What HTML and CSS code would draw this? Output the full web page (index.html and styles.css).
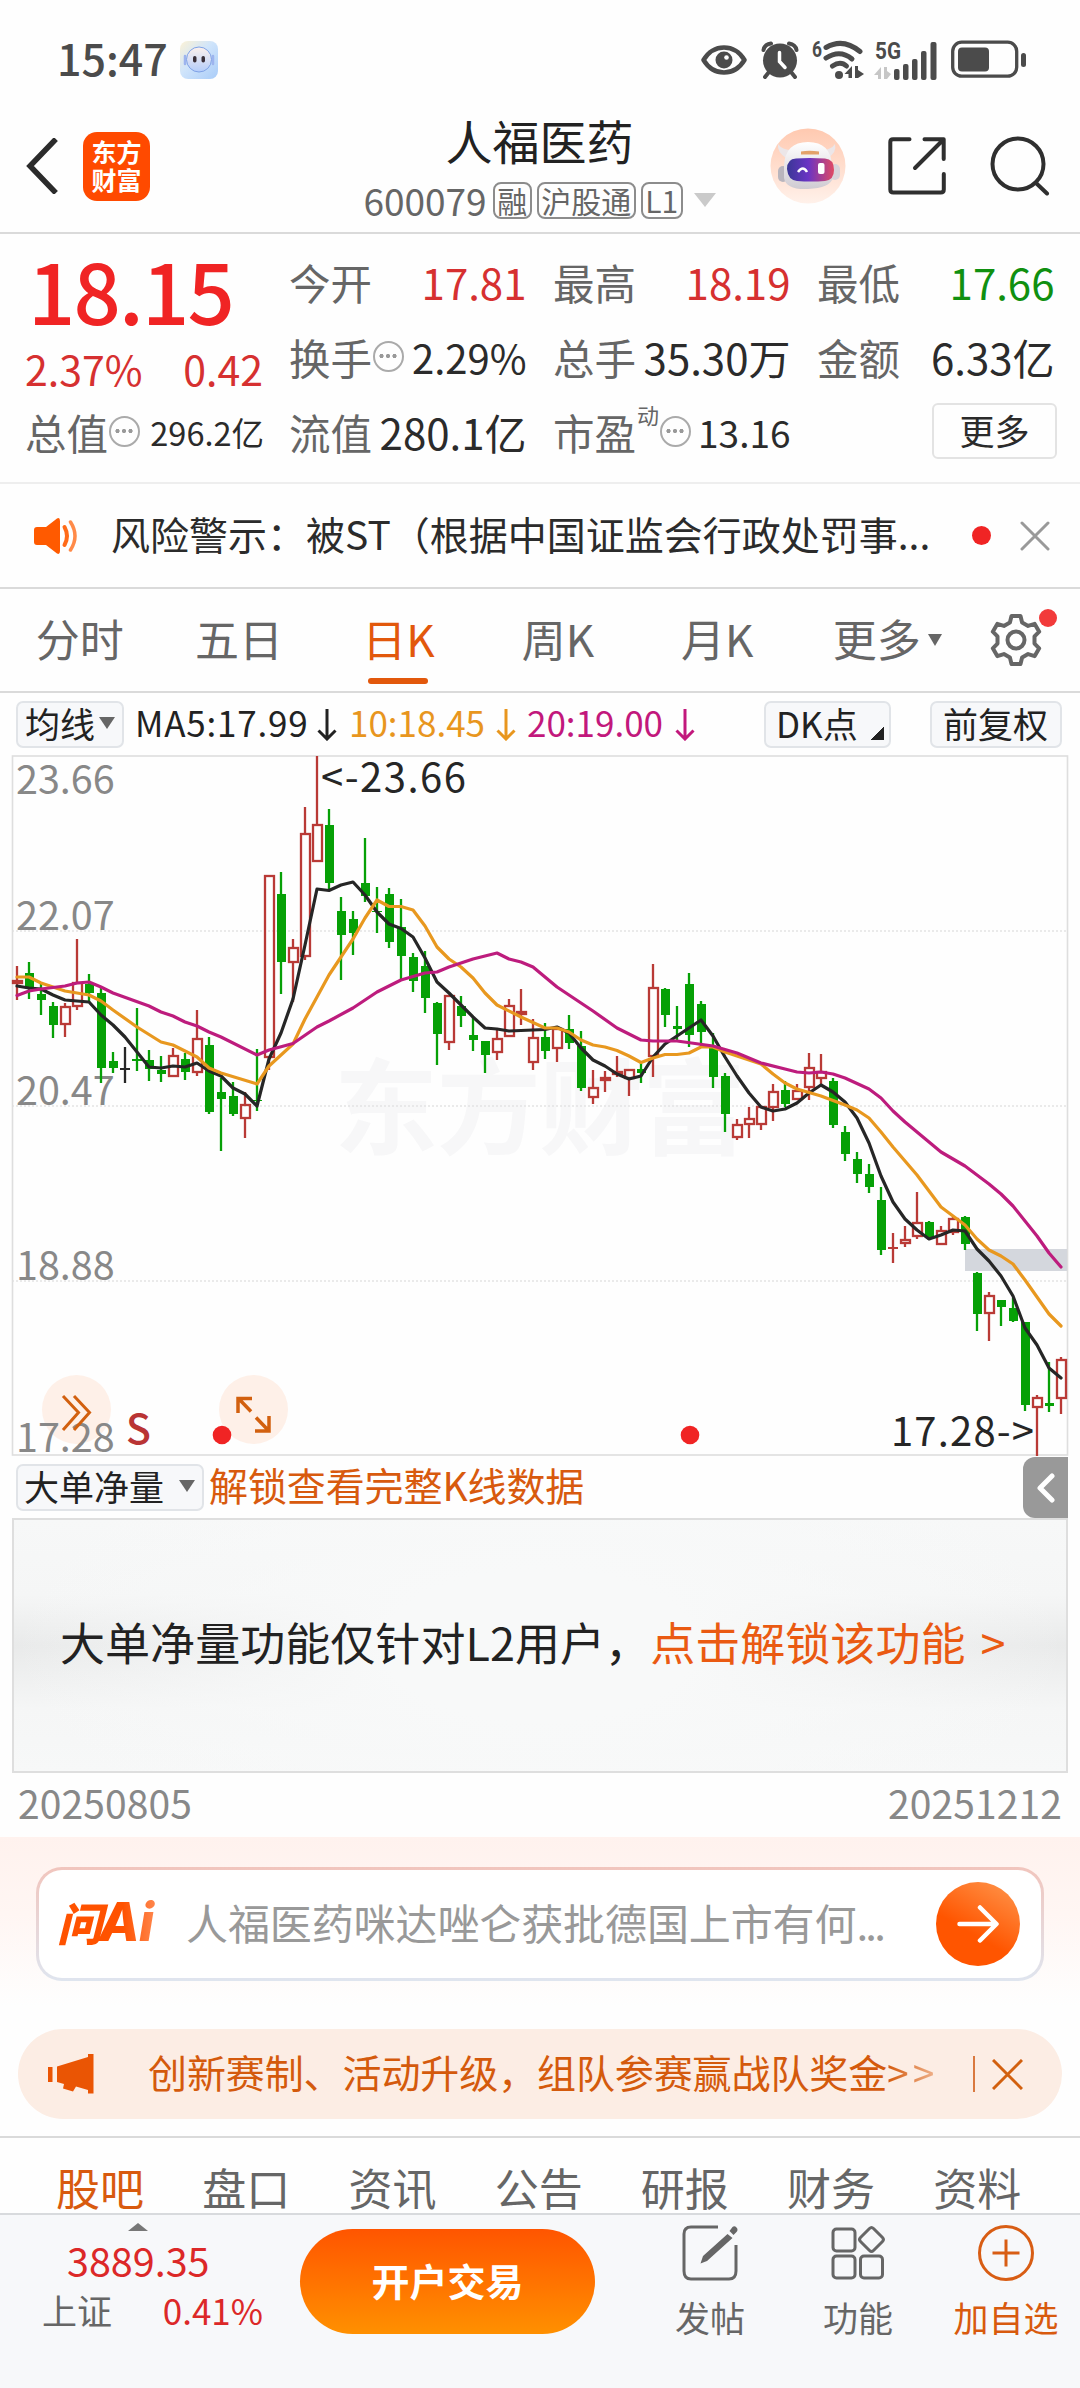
FILE: index.html
```html
<!DOCTYPE html>
<html lang="zh-CN">
<head>
<meta charset="utf-8">
<title>人福医药 600079</title>
<link rel="stylesheet" href="styles.css">
</head>
<body>
<div class="status">
  <span class="clock">15:47</span>
  <svg class="face" width="38" height="38" viewBox="0 0 38 38">
    <defs><linearGradient id="fc" x1="0" y1="0" x2="1" y2="1"><stop offset="0" stop-color="#fdf3d6"/><stop offset=".45" stop-color="#cfe4fb"/><stop offset="1" stop-color="#a9ccf8"/></linearGradient>
    <linearGradient id="fh" x1="0" y1="0" x2="0" y2="1"><stop offset="0" stop-color="#fdf1ec"/><stop offset="1" stop-color="#b4cdfb"/></linearGradient></defs>
    <rect width="38" height="38" rx="8" fill="url(#fc)"/><path d="M5 15v8M33 15v8" stroke="#9db4ee" stroke-width="2.5" stroke-linecap="round"/>
    <circle cx="19" cy="18.500" r="12.500" fill="url(#fh)" stroke="#7fa2e6"/><rect x="13" y="15" width="3.500" height="6.500" rx="1.700" fill="#3a2f38"/><rect x="21.500" y="15" width="3.500" height="6.500" rx="1.700" fill="#3a2f38"/>
  </svg>
  <div class="status-icons">
    <svg width="46" height="36" viewBox="0 0 46 36"><path d="M2.500 18C8 9 15 5.500 23 5.500S38 9 43.500 18C38 27 31 30.500 23 30.500S8 27 2.500 18z" fill="none" stroke="#4b4b4b" stroke-width="4.500" stroke-linejoin="round"/><circle cx="23" cy="18" r="8.500" fill="#4b4b4b"/><circle cx="25.500" cy="15.500" r="2.300" fill="#fff"/></svg>
    <svg class="i-alarm" width="38" height="38" viewBox="0 0 38 38"><g fill="none" stroke="#4b4b4b" stroke-linecap="round"><path d="M2.500 9Q3.500 3.500 10 2.500M35.500 9Q34.500 3.500 28 2.500" stroke-width="4"/><path d="M8 31l-4 5M30 31l4 5" stroke-width="4"/></g><circle cx="19" cy="19.500" r="17" fill="#4b4b4b"/><path d="M18.500 11.500v9l5.500 6" fill="none" stroke="#fff" stroke-width="3.500" stroke-linecap="round"/></svg>
    <svg class="i-wifi" width="52" height="42" viewBox="0 0 52 42"><text x="0" y="18" class="net" font-size="22" textLength="10" lengthAdjust="spacingAndGlyphs">6</text><g fill="none" stroke="#4b4b4b" stroke-width="5" stroke-linecap="round"><path d="M14 8.500q17-10 34 4"/><path d="M14 19q14-9 26 1"/><path d="M20.500 27q8-5.500 14 0"/></g><circle cx="27" cy="36" r="4" fill="#4b4b4b"/><path d="M40 27v12h-3.500v-4h-4zM43 39V27h3v4l6 4-6 4z" fill="#4b4b4b"/></svg>
    <svg class="i-cell" width="63" height="42" viewBox="0 0 63 42"><text x="1" y="20" class="net" font-size="24" textLength="26" lengthAdjust="spacingAndGlyphs">5G</text><path d="M7 28v12H4v-4H0zM10 40V28h3v4l4 3-4 5z" fill="#c6c6c6"/><g fill="#4b4b4b"><rect x="20" y="30" width="5.500" height="11" rx="2"/><rect x="29" y="25" width="5.500" height="16" rx="2"/><rect x="38" y="20" width="5.500" height="21" rx="2"/><rect x="47" y="12" width="5.500" height="29" rx="2"/><rect x="56.500" y="3" width="6" height="38" rx="2"/></g></svg>
    <svg class="i-batt" width="75" height="38" viewBox="0 0 75 38"><rect x="1.700" y="2.200" width="64" height="34" rx="9" fill="none" stroke="#4b4b4b" stroke-width="3.300"/><rect x="7" y="7.500" width="31" height="24" rx="4" fill="#4b4b4b"/><rect x="70" y="13" width="5" height="14" rx="2.500" fill="#4b4b4b"/></svg>
  </div>
</div>

<header class="header">
  <div class="side">
    <svg width="34" height="56" viewBox="0 0 34 56"><path d="M29 3L5 28l24 25" fill="none" stroke="#2b2b2b" stroke-width="5.500" stroke-linecap="square"/></svg>
    <div class="logo"><span>东方</span><span>财富</span></div>
  </div>
  <div class="title">
    <h1>人福医药</h1>
    <div class="code">600079<i class="first">融</i><i>沪股通</i><i>L1</i><b class="tri"></b></div>
  </div>
  <div class="side right">
    <svg width="76" height="76" viewBox="0 0 76 76">
      <defs><linearGradient id="rb" x1="0" y1="0" x2="0" y2="1"><stop offset="0" stop-color="#ffc9b0"/><stop offset="1" stop-color="#fff1ea"/></linearGradient>
      <linearGradient id="rv" x1="0" y1="0" x2="1" y2="0"><stop offset="0" stop-color="#3a3796"/><stop offset=".45" stop-color="#6a34c4"/><stop offset="1" stop-color="#e04a63"/></linearGradient>
      <linearGradient id="rw" x1="0" y1="0" x2="0" y2="1"><stop offset="0" stop-color="#ffffff"/><stop offset="1" stop-color="#cfcbd2"/></linearGradient></defs>
      <circle cx="38" cy="38" r="37.500" fill="url(#rb)"/>
      <path d="M8 16q-1 8 8 14l6-8q-10 0-14-6zM65 16q2 8-7 14l-6-8q9 0 13-6z" fill="#ece6e8"/>
      <rect x="8" y="38" width="10" height="16" rx="5" fill="#b9b5bd"/><rect x="60" y="36" width="10" height="16" rx="5" fill="#d8d4da"/>
      <path d="M14 38Q15 14 38 14t24 24l1 12Q60 60 38 61T14 50z" fill="url(#rw)"/>
      <path d="M31 23.500q8-1.500 18 0v3H31z" fill="#e3a26a"/>
      <path d="M17 41q0-10 9-10.500 13-1 29 0Q64 31 64 42q0 10-9 11-14 1-28 0-9-1-10-12z" fill="url(#rv)"/>
      <path d="M28 44q5-7 9 0" fill="none" stroke="#fff" stroke-width="2.500"/><rect x="48" y="35" width="6.500" height="11" rx="2" fill="#fff"/>
    </svg>
    <svg class="share" width="58" height="58" viewBox="0 0 58 58"><g fill="none" stroke="#2f2f2f" stroke-width="4" stroke-linecap="round" stroke-linejoin="round"><path d="M21.500 2.300H5Q2.300 2.300 2.300 5v47.500q0 3 3 3h47.500q3 0 3-3V37"/><path d="M36.500 2.300H55.700V22M55 3L27 31"/></g></svg>
    <svg class="search" width="60" height="60" viewBox="0 0 60 60"><circle cx="28" cy="28" r="25.500" fill="none" stroke="#2f2f2f" stroke-width="4"/><path d="M46 47l11 10.500" stroke="#2f2f2f" stroke-width="4" stroke-linecap="round"/></svg>
  </div>
</header>

<section class="quote">
  <div class="col first">
    <div class="price">18.15</div>
    <div class="chg"><span>2.37%</span><span>0.42</span></div>
    <div class="cell"><label>总值</label><em class="info"></em><span class="v s33">296.2亿</span></div>
  </div>
  <div class="col">
    <div class="cell"><label>今开</label><span class="v red">17.81</span></div>
    <div class="cell"><label>换手</label><em class="info"></em><span class="v s40">2.29%</span></div>
    <div class="cell"><label>流值</label><span class="v">280.1亿</span></div>
  </div>
  <div class="col">
    <div class="cell"><label>最高</label><span class="v red">18.19</span></div>
    <div class="cell"><label>总手</label><span class="v">35.30万</span></div>
    <div class="cell"><label>市盈</label><sup>动</sup><em class="info"></em><span class="v s37">13.16</span></div>
  </div>
  <div class="col">
    <div class="cell"><label>最低</label><span class="v green">17.66</span></div>
    <div class="cell"><label>金额</label><span class="v">6.33亿</span></div>
    <div class="cell"><span class="more">更多</span></div>
  </div>
</section>

<section class="alert">
  <svg width="46" height="38" viewBox="0 0 46 38"><path d="M3 10h9L23 1.500Q26 0 26 4v30q0 4-3 2.500L12 28H3q-3 0-3-3V13q0-3 3-3z" fill="#ff5a00"/><path d="M30.500 10q5 9 0 18" fill="none" stroke="#ff6a18" stroke-width="4" stroke-linecap="round"/><path d="M36.500 5q9 14 0 28" fill="none" stroke="#ff8a48" stroke-width="3.500" stroke-linecap="round"/></svg>
  <p>风险警示：被ST（根据中国证监会行政处罚事...</p>
  <b class="dot"></b>
  <svg width="30" height="30" viewBox="0 0 30 30"><path d="M2 2l26 26M28 2L2 28" stroke="#999" stroke-width="3" stroke-linecap="round"/></svg>
</section>

<nav class="ktabs">
  <span>分时</span><span>五日</span><span class="on">日K</span><span>周K</span><span>月K</span><span>更多</span>
  <b class="tri"></b>
  <div class="gear">
    <svg width="52" height="52" viewBox="0 0 52 52"><path d="M21.500 2h9l1.600 6.500 6 3.400 6.600-2 4.500 7.800-4.700 4.700v7.200l4.700 4.700-4.500 7.800-6.600-2-6 3.400L30.500 50h-9l-1.600-6.500-6-3.400-6.600 2-4.500-7.800 4.700-4.700v-7.200l-4.700-4.700 4.500-7.800 6.600 2 6-3.400z" fill="none" stroke="#666" stroke-width="4" stroke-linejoin="round"/><circle cx="26" cy="26" r="8.500" fill="none" stroke="#666" stroke-width="4"/></svg>
    <b class="dot"></b>
  </div>
</nav>

<div class="ma">
  <span class="chip avg">均线<b class="tri"></b></span>
  <span class="m m5">MA5:17.99<svg width="20" height="32" viewBox="0 0 20 32"><path d="M10 0v30M1.500 21.500L10 30l8.500-8.500" fill="none" stroke="currentColor" stroke-width="3"/></svg></span>
  <span class="m m10">10:18.45<svg width="20" height="32" viewBox="0 0 20 32"><path d="M10 0v30M1.500 21.500L10 30l8.500-8.500" fill="none" stroke="currentColor" stroke-width="3"/></svg></span>
  <span class="m m20">20:19.00<svg width="20" height="32" viewBox="0 0 20 32"><path d="M10 0v30M1.500 21.500L10 30l8.500-8.500" fill="none" stroke="currentColor" stroke-width="3"/></svg></span>
  <span class="chip dk">DK点<b></b></span>
  <span class="chip fq">前复权</span>
</div>

<svg class="chart" id="chart" width="1080" height="701" viewBox="0 755 1080 701">
  <text class="mark" x="334" y="1147" textLength="412">东方财富</text>
  <g stroke="#e3e3e3" stroke-width="1.500" stroke-dasharray="2 2"><path d="M12 931H1067M12 1106H1067M12 1281H1067"/></g>
  <rect x="12.500" y="756" width="1055" height="699" fill="none" stroke="#dedede" stroke-width="1.600"/>
  <rect x="965" y="1249" width="102" height="22" fill="#d4d7dd"/>
  <circle cx="76.500" cy="1409.500" r="34.500" fill="#fef0e8"/><circle cx="253.500" cy="1409.500" r="34.500" fill="#fef0e8"/>
  <g class="axis"><text x="16" y="793.500">23.66</text><text x="16" y="930">22.07</text><text x="16" y="1105">20.47</text><text x="16" y="1280">18.88</text><text x="16" y="1451.500">17.28</text></g>
  <g fill="none" stroke="#d2600f" stroke-width="3"><path d="M63 1396l15.500 16.500L63 1430M74 1396l15.500 16.500L74 1430"/><path d="M238 1413v-14.500h14M239 1399l12 12.500M269 1416v15h-14M268 1430l-12-12.500" stroke-width="3.500"/></g>
  <text class="sell" x="126" y="1444">S</text>
  <circle cx="222" cy="1435" r="9.300" fill="#f02424"/><circle cx="690" cy="1435" r="9.300" fill="#f02424"/>
  <g id="candles"></g>
  <g id="lines" fill="none" stroke-width="3.200" stroke-linejoin="round" stroke-linecap="round"></g>
  <text class="peak" x="321" y="791.500" textLength="145">&lt;-23.66</text>
  <text class="peak" x="891" y="1446" textLength="143">17.28-&gt;</text>
</svg>

<div class="sub">
  <span class="chip big">大单净量<b class="tri"></b></span>
  <span class="unlock">解锁查看完整K线数据</span>
  <span class="handle"><svg width="18" height="30" viewBox="0 0 18 30"><path d="M15 3L3 15l12 12" fill="none" stroke="#fff" stroke-width="5" stroke-linecap="round" stroke-linejoin="round"/></svg></span>
</div>
<div class="locked"><p>大单净量功能仅针对L2用户，<span>点击解锁该功能 &gt;</span></p></div>
<div class="dates"><span>20250805</span><span>20251212</span></div>

<section class="ask">
  <div class="askbox">
    <span class="wen">问<em>Ai</em></span>
    <span class="hint">人福医药咪达唑仑获批德国上市有何<i>...</i></span>
    <span class="go"><svg width="42" height="38" viewBox="0 0 42 38"><path d="M2.500 19H39M23 2.500L39.500 19 23 35.500" fill="none" stroke="#fff" stroke-width="4.500" stroke-linecap="round" stroke-linejoin="round"/></svg></span>
  </div>
</section>

<section class="promo">
  <svg width="46" height="40" viewBox="0 0 46 40"><path d="M0 13h4.500v15H0zM9 12.500L40 3V0h5.500v39.500H40V36L28 32.500l-3 5-10-3 1-4.500-7-2z" fill="#ea5504"/></svg>
  <p>创新赛制、活动升级，组队参赛赢战队奖金<span>&gt;&gt;</span></p>
  <i></i>
  <svg width="31" height="31" viewBox="0 0 31 31"><path d="M1 1l29 29M30 1L1 30" stroke="#d2600f" stroke-width="3"/></svg>
</section>

<nav class="btabs"><span class="on">股吧</span><span>盘口</span><span>资讯</span><span>公告</span><span>研报</span><span>财务</span><span>资料</span></nav>

<footer class="footer">
  <div class="index">
    <b class="up"></b>
    <div class="pt">3889.35</div>
    <div class="ix"><span>上证</span><span class="r">0.41%</span></div>
  </div>
  <div class="trade">开户交易</div>
  <div class="act">
    <svg width="56" height="56" viewBox="0 0 56 56"><path d="M36 2H9Q2 2 2 9v37q0 8 7 8h38q7 0 7-8V20" fill="none" stroke="#666" stroke-width="3"/><path d="M45.500 9l5 4L25 36l-6.500 2.500L21 31zM47.500 6l3-4q2-1.500 4 .5t0 4.500l-3 3z" fill="#666"/></svg>
    <span>发帖</span>
  </div>
  <div class="act">
    <svg width="56" height="56" viewBox="0 0 56 56"><g fill="none" stroke="#666" stroke-width="3"><rect x="3" y="4" width="22" height="22" rx="3.500"/><rect x="3" y="31" width="22" height="22" rx="3.500"/><rect x="30.500" y="31" width="22" height="22" rx="3.500"/><path d="M39.500 3.500q2-2 4 0l9 9q2 2 0 4l-9 9q-2 2-4 0l-9-9q-2-2 0-4z"/></g></svg>
    <span>功能</span>
  </div>
  <div class="act add">
    <svg width="58" height="58" viewBox="0 0 58 58"><g fill="none" stroke="#d85d14" stroke-width="3"><circle cx="29" cy="29" r="26.500"/><path d="M29 15.500v27M15.500 29h27"/></g></svg>
    <span>加自选</span>
  </div>
</footer>
<script src="chart.js"></script>
</body>
</html>
```
FILE: styles.css
```css
* { box-sizing: border-box; margin: 0; padding: 0; }
body { width: 1080px; height: 2388px; overflow: hidden; background: #fefefe; color: #2b2b2b; font-family: "Noto Sans CJK SC", "Noto Sans", sans-serif; white-space: nowrap; }
svg { display: block; flex: none; }
i, em { font-style: normal; }
.tri { display: block; border: solid transparent; border-width: 12px 7.5px 0; border-top-color: #666; }
.dot { display: block; width: 19px; height: 19px; border-radius: 50%; background: #f02424; }

.status { height: 100px; padding: 20px 54px 0 57px; display: flex; align-items: center; }
.clock { font-size: 43px; line-height: 64px; margin-top: -6px; font-weight: 500; color: #4b4b4b; width: 111px; }
.face { margin-left: 12px; }
.status-icons { margin-left: auto; display: flex; align-items: center; }
.i-alarm { margin-left: 14px; }
.i-wifi { margin-left: 13px; }
.i-cell { margin-left: 10px; }
.i-batt { margin-left: 14px; margin-top: -3px; }
.net { font-family: Roboto, sans-serif; font-weight: 700; fill: #4b4b4b; }

.header { height: 134px; border-bottom: 2px solid #dadada; display: flex; align-items: center; padding: 0 30px 0 25px; }
.side { flex: 1 1 0; display: flex; align-items: center; }
.side.right { justify-content: flex-end; }
.logo { width: 67px; height: 69px; margin-left: 24px; border-radius: 14px; background: #ff4a00; color: #fff; font-size: 25px; font-weight: 700; line-height: 28px; display: flex; flex-direction: column; align-items: center; justify-content: center; padding-bottom: 2px; }
.title { display: flex; flex-direction: column; align-items: center; align-self: flex-start; padding-top: 8px; margin-left: 4px; }
h1 { font-size: 47px; font-weight: 400; line-height: 64px; color: #222; }
.code { height: 56px; display: flex; align-items: center; font-size: 37px; line-height: 50px; color: #666; }
.code i { font-size: 30px; line-height: 32px; height: 37px; border: 2px solid #8c8c8c; border-radius: 8px; padding: 0 2.5px; margin-left: 5px; }
.code i.first { margin-left: 6px; }
.code .tri { border-width: 14px 11px 0; border-top-color: #cacaca; margin-left: 11px; }
.share { margin-left: 42px; }
.search { margin-left: 44px; }

.quote { height: 250px; border-bottom: 2px solid #eee; padding: 10px 25px 0 26px; display: grid; grid-template-columns: repeat(4, 238px); column-gap: 26px; }
.cell { height: 75px; display: flex; align-items: center; font-size: 42px; line-height: 60px; }
.cell label { color: #666; font-size: 41.5px; margin-left: -1px; }
.cell .v { margin-left: auto; color: #2b2b2b; }
.cell .v:not(.s33) { margin-right: 1.5px; }
.cell .s33 { font-size: 32.5px; padding-top: 1px; }
.cell .s37 { font-size: 37px; }
.cell .s40 { font-size: 40px; }
.cell .red, .chg { color: #d63030; }
.cell .green { color: #109010; }
.cell sup { font-size: 22px; line-height: 24px; color: #666; align-self: flex-start; margin-top: 8px; margin-left: 1px; }
.price { height: 90px; line-height: 90px; font-size: 83px; font-weight: 500; color: #f02424; padding-left: 2px; letter-spacing: -1.8px; }
.chg { height: 70px; line-height: 68px; font-size: 41px; display: flex; justify-content: space-between; padding-right: 1px; }
.chg span { margin-left: -1px; }
.first .cell { height: 55px; }
.info { flex: none; width: 31px; height: 31px; margin-left: 1px; border: 2.5px solid #aaa; border-radius: 50%; background: radial-gradient(circle at 6.5px 13px, #999 1.8px, transparent 2.4px), radial-gradient(circle at 13px 13px, #999 1.8px, transparent 2.4px), radial-gradient(circle at 19.5px 13px, #999 1.8px, transparent 2.4px); }
.more { margin: -2px -1px 0 auto; width: 125px; height: 56px; border: 2px solid #e3e3e3; border-radius: 6px; text-align: center; font-size: 35px; line-height: 50px; }

.alert { height: 105px; border-bottom: 2px solid #dadada; display: flex; align-items: center; padding: 0 30px 0 34px; }
.alert p { font-size: 39px; line-height: 60px; margin: -6px 0 0 31px; width: 861px; color: #2b2b2b; }
.alert .dot { margin-right: 29px; }

.ktabs { height: 104px; border-bottom: 2px solid #dadada; display: flex; align-items: center; font-size: 44px; color: #666; }
.ktabs > span { width: 159.4px; height: 102px; line-height: 98px; text-align: center; flex: none; display: flex; flex-direction: column; align-items: center; }
.ktabs .on { color: #e2580c; }
.ktabs .on::after { content: ""; width: 60px; height: 6px; border-radius: 3px; background: #e2580c; margin-top: -9px; flex: none; }
.ktabs > .tri { margin-left: -28px; }
.gear { position: relative; margin-left: 48px; }
.gear .dot { position: absolute; left: 49px; top: -5px; width: 18px; height: 18px; background: #f23a3a; }

.ma { height: 62px; display: flex; align-items: center; padding: 0 16px; font-size: 35px; line-height: 50px; }
.chip { height: 47px; border: 2px solid #e1e4e8; border-radius: 7px; background: #f7f8fa; color: #222; font-size: 35px; line-height: 38px; display: flex; align-items: center; flex: none; padding-bottom: 2px; }
.chip .tri { border-width: 12px 8px 0; }
.avg { width: 108px; padding-left: 7px; }
.avg .tri { margin-left: 4px; }
.m { display: flex; align-items: center; flex: none; margin-top: -5px; }
.m svg { margin: 6px 0 0 auto; }
.m5 { color: #222; width: 202px; margin-left: 11px; letter-spacing: 0.8px; }
.m10 { color: #e8961e; width: 167px; margin-left: 12px; }
.m20 { color: #c2187c; width: 168px; margin-left: 11px; }
.dk { width: 127px; margin-left: 69px; padding-left: 10px; }
.dk b { width: 13px; height: 13px; margin: 20px 5px 0 auto; background: linear-gradient(135deg, transparent 50%, #222 50%); }
.fq { width: 132px; margin-left: 39px; padding-left: 11px; }

.chart { font-family: "Noto Sans CJK SC", sans-serif; }
.mark { font-size: 104px; font-weight: 700; fill: #f7f7f8; }
.axis { font-size: 39.5px; fill: #888; }
.sell { font-size: 41px; font-weight: 500; fill: #b93434; }
.peak { font-size: 40px; fill: #262626; }

.sub { position: relative; height: 62px; padding-left: 16px; display: flex; align-items: center; }
.big { width: 188px; padding-left: 6px; }
.big .tri { margin-left: 15px; }
.unlock { margin: -6px 0 0 5px; color: #d85a0e; font-size: 39px; line-height: 56px; letter-spacing: -0.1px; }
.handle { position: absolute; left: 1023px; top: 1px; width: 45px; height: 61px; border-radius: 12px 0 0 12px; background: #999; display: flex; align-items: center; justify-content: center; }
.locked { width: 1056px; height: 255px; margin-left: 12px; border: 2px solid #dedede; background: radial-gradient(ellipse 50% 100% at 50% 50%, rgba(248,249,249,1) 30%, rgba(248,249,249,0) 100%), linear-gradient(#f7f8f8, #f5f6f6 30%, #e9eaea 50%, #f5f6f6 75%, #f7f8f8); padding-left: 46px; }
.locked p { font-size: 45px; line-height: 244px; letter-spacing: 0.05px; word-spacing: 5px; color: #222; }
.locked span { color: #ea5a12; }
.dates { height: 64px; padding: 0 18px; display: flex; justify-content: space-between; font-size: 39px; line-height: 59px; letter-spacing: 0.1px; color: #888; }

.ask { height: 192px; padding: 30px 36px 0; background: linear-gradient(#fff2ee, #fff6f3 40%, #fefefe 88%); }
.askbox { height: 114px; border: 3px solid transparent; border-radius: 26px; background: linear-gradient(#fff, #fff) padding-box, linear-gradient(#f1c5bd, #dfe5ef) border-box; display: flex; align-items: center; padding: 0 21px; }
.wen { width: 120px; font-size: 45px; line-height: 60px; font-weight: 900; letter-spacing: -3px; font-style: italic; margin: -5px 0 0 -3px; background: linear-gradient(90deg, #ff5200 55%, #ff8c55 85%); background-clip: text; -webkit-background-clip: text; color: transparent; }
.wen em { font-family: Inter, sans-serif; font-size: 53px; font-style: italic; font-weight: 800; letter-spacing: -1px; }
.hint { font-size: 42px; line-height: 60px; margin: -5px 0 0 9px; color: #999; letter-spacing: -0.1px; }
.hint i { letter-spacing: -2.8px; }
.go { width: 84px; height: 84px; border-radius: 50%; margin-left: auto; background: linear-gradient(30deg, #ff5500 40%, #ff8d42 90%); display: flex; align-items: center; justify-content: center; }

.promo { height: 90px; margin: 0 18px; padding: 0 39px 0 30px; border-radius: 45px; background: #fcede4; display: flex; align-items: center; }
.promo p { margin: -6px 0 0 54px; font-size: 39px; line-height: 60px; letter-spacing: -0.1px; color: #d45a0c; }
.promo p span { background: linear-gradient(90deg, #d45a0c, #f0b692); background-clip: text; -webkit-background-clip: text; color: transparent; letter-spacing: 4px; }
.promo i { width: 2px; height: 36px; background: #d9793f; margin: 0 17px 0 auto; }

.btabs { height: 77px; margin-top: 17px; border-top: 2px solid #dadada; padding: 0 29px 0 27px; display: grid; grid-template-columns: repeat(7, 146.2px); overflow: hidden; font-size: 44px; line-height: 98px; text-align: center; color: #666; }
.btabs .on { color: #d85a0e; }

.footer { height: 176px; border-top: 2px solid #d8dadd; background: #f7f8fa; display: flex; }
.index { width: 221px; margin-left: 42px; display: flex; flex-direction: column; }
.up { width: 0; border: solid transparent; border-width: 0 10px 8px; border-bottom-color: #777; margin: 8px 0 0 86px; }
.pt { font-size: 39.5px; line-height: 50px; margin: 4px 0 0 25px; color: #dc2828; }
.ix { display: flex; justify-content: space-between; font-size: 35px; line-height: 46px; color: #666; margin-top: 2px; }
.ix .r { color: #dc2828; }
.trade { width: 295px; height: 105px; margin: 14px 0 0 37px; border-radius: 53px; background: linear-gradient(#ff5500, #ff9000); color: #fff; font-size: 38px; font-weight: 700; line-height: 101px; text-align: center; }
.act { width: 148px; padding-top: 9px; display: flex; flex-direction: column; align-items: center; font-size: 35px; line-height: 46px; color: #666; }
.act svg { height: 58px; }
.act span { margin-top: 12px; }
.trade + .act { margin-left: 41px; }
.add { color: #d85a0e; }
```
FILE: chart.js
```js
// Each candle: colour (r rise, g fall, k flat), high, body top, body bottom, low
const bars = `r966,980,984,1000 g962,973,987,999 g984,994,1000,1015 g1002,1006,1025,1038 r1003,1006,1025,1037
r939,982,1007,1010 g974,984,993,1002 g987,993,1068,1083 g1052,1061,1068,1073 k1047,1068,1070,1083
g1008,1059,1061,1071 g1050,1060,1069,1081 g1056,1070,1074,1082 r1048,1055,1077,1077 g1053,1059,1072,1080
r1010,1038,1073,1076 g1037,1045,1112,1114 g1078,1092,1099,1151 g1082,1096,1114,1116 r1092,1104,1119,1138
g1049,1100,1101,1111 r875,875,1058,1070 g872,894,962,994 r939,947,963,1002 r807,833,957,960
r756,824,862,862 g809,825,883,889 g897,911,935,980 g911,919,933,955 g838,883,896,902
g887,911,912,933 g888,894,942,948 g899,927,956,979 g953,957,981,992 g951,966,998,1013
g1002,1003,1034,1065 r995,995,1043,1050 g996,1006,1016,1027 g1018,1035,1040,1051 g1041,1041,1055,1073
r1028,1038,1053,1060 r999,1005,1037,1037 r989,1011,1015,1025 r1019,1037,1063,1070 g1023,1037,1051,1059
r1027,1028,1049,1062 g1015,1029,1043,1049 g1031,1046,1088,1091 r1070,1087,1098,1104 r1071,1077,1081,1092
r1056,1071,1075,1077 r1069,1069,1079,1096 g1063,1069,1073,1083 r964,987,1057,1077 g988,989,1015,1027
g1006,1026,1029,1040 g973,984,1035,1047 g1001,1004,1032,1046 g1033,1048,1077,1088 g1073,1076,1114,1132
r1119,1124,1138,1140 r1107,1118,1125,1138 r1106,1106,1125,1130 r1084,1091,1108,1121 g1081,1090,1104,1107
r1084,1090,1100,1100 r1053,1067,1088,1100 r1054,1071,1079,1085 g1078,1081,1125,1128 g1126,1132,1154,1161
g1152,1159,1174,1183 g1164,1174,1187,1193 g1187,1200,1250,1255 r1233,1247,1249,1263 r1226,1239,1244,1247
r1192,1222,1237,1239 g1221,1222,1238,1240 r1226,1230,1245,1245 r1217,1218,1233,1235 g1216,1217,1244,1250
g1272,1273,1314,1331 r1292,1295,1314,1341 g1300,1300,1307,1326 g1298,1308,1321,1322 g1322,1322,1405,1411
r1395,1397,1408,1456 g1362,1403,1406,1412 r1357,1359,1399,1414`.split(/\s+/);
const ink = { r: '#b93a36', g: '#06a006', k: '#262626' };

document.getElementById('candles').innerHTML = bars.map((b, i) => {
  const x = 17 + 12 * i, c = ink[b[0]];
  const [h, t, o, l] = b.slice(1).split(',').map(Number);
  const wick = `<path d="M${x} ${h}V${t}M${x} ${o}V${l}" stroke="${c}" stroke-width="2.3"/>`;
  const body = b[0] === 'r' && o - t > 3
    ? `<rect x="${x - 4}" y="${t + 1}" width="9" height="${o - t - 2}" fill="none" stroke="${c}" stroke-width="2.3"/>`
    : `<rect x="${x - (o - t < 3 ? 5 : 4)}" y="${t}" width="${o - t < 3 ? 10 : 9}" height="${o - t}" fill="${c}"/>`;
  return wick + body;
}).join('');

const averages = {
  '#262626': '17,986 29,988 41,989 53,995 65,1000 77,1001 89,1002 101,1015 113,1025 125,1037 137,1052 149,1067 161,1068 173,1066 185,1067 197,1063 209,1071 221,1076 233,1088 245,1094 257,1106 269,1059 281,1033 293,999 305,945 317,889 329,890.5 341,885 353,882 365,895 377,912 389,924 401,928.5 413,937 425,958 437,982 449,993 461,1005 473,1017 485,1028 497,1029 509,1031 521,1030.5 545,1029.5 557,1027 569,1033 581,1048 593,1060 605,1066 617,1074 629,1079 641,1076 653,1057 665,1044 677,1036 701,1020 713,1036 725,1057 737,1076 749,1093 761,1107 773,1111 785,1109 797,1103 809,1093 821,1085 833,1092 845,1102 857,1118 869,1143 881,1176 893,1202 905,1219 917,1230 929,1239 941,1235 953,1230 965,1231 977,1249 989,1261 1001,1276 1013,1296 1025,1328 1037,1345 1049,1368 1061,1378',
  '#e8981f': '17,977 29,977 41,983 65,991 89,995 101,1001 113,1010 137,1027 161,1042 173,1045 197,1057 209,1068 221,1073 257,1084 269,1066 281,1055 293,1044 305,1019 329,975 341,957 353,939 365,918 377,900 389,906.5 401,906.5 413,910 425,926 437,947 449,959 461,967 473,978 485,993 497,1005 521,1017 545,1028 557,1028 569,1032 581,1040 593,1045 605,1047 617,1050.5 629,1056 641,1062.5 653,1058 665,1054.5 677,1054.5 689,1053 701,1047 713,1047 725,1052 749,1060 761,1064 773,1074 785,1083 797,1089 821,1096 845,1105 857,1110 869,1118 881,1132 893,1147 917,1175 929,1191 941,1207 965,1225 977,1239 989,1250 1001,1256 1013,1264 1025,1280 1049,1314 1061,1326',
  '#bd1c7d': '17,995.5 29,991 41,989 65,986 77,983 89,982 101,987 113,993 149,1006 161,1012 173,1016 185,1022 197,1026 209,1032 221,1037 257,1055 269,1050 293,1043.5 317,1027 329,1021 353,1008 377,992 401,980 425,973 437,972 449,967 473,959 497,953 509,959 521,962 533,967 557,987 593,1011 617,1028 641,1040 653,1041 677,1041 713,1046 737,1053 761,1063 785,1069 797,1072 809,1073 821,1072 833,1074 845,1078 869,1089 881,1098 893,1111 905,1122 929,1142 941,1152 965,1166 977,1175 989,1184 1001,1194 1013,1206 1037,1236 1049,1253 1061,1267'
};
document.getElementById('lines').innerHTML = Object.entries(averages)
  .map(([c, p]) => `<polyline points="${p}" stroke="${c}"/>`).join('');
```
